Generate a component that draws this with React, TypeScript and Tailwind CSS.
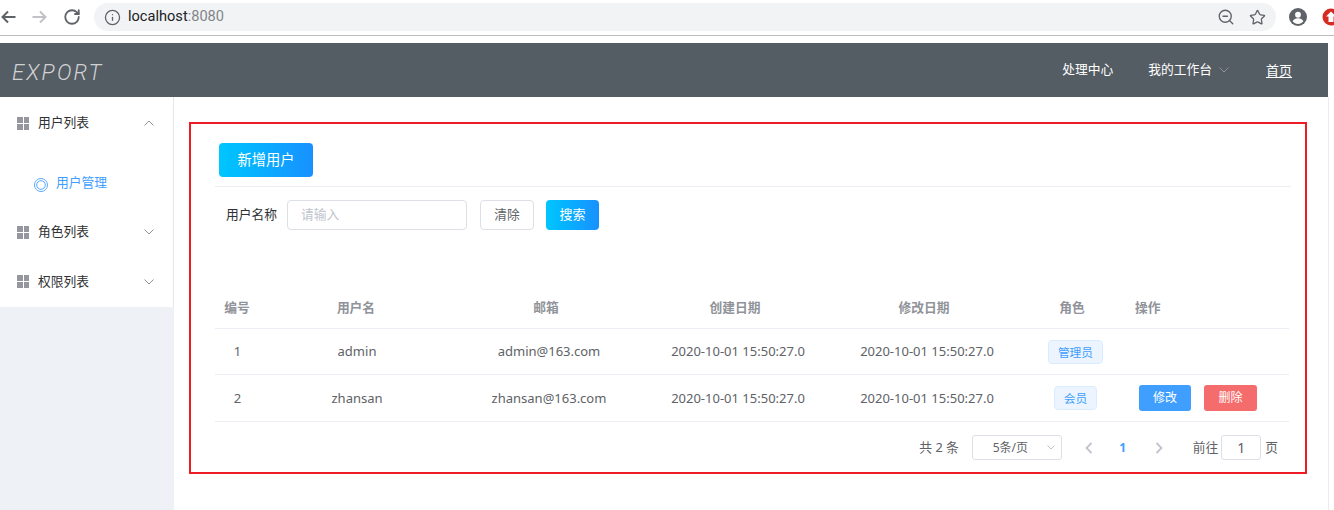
import { RotateCw, Info, ZoomOut, Star } from "lucide-react";

const users = [
  { id: 1, name: "admin", email: "admin@163.com", created: "2020-10-01 15:50:27.0", updated: "2020-10-01 15:50:27.0", role: "管理员", editable: false },
  { id: 2, name: "zhansan", email: "zhansan@163.com", created: "2020-10-01 15:50:27.0", updated: "2020-10-01 15:50:27.0", role: "会员", editable: true },
];

const cols = "grid grid-cols-[44px_196px_188px_190px_188px_108px_160px]";

function GridIcon() {
  return (
    <span className="grid grid-cols-2 gap-px w-3 h-[13px] mr-[9px] shrink-0">
      <i className="bg-[#96969e]" />
      <i className="bg-[#96969e]" />
      <i className="bg-[#96969e]" />
      <i className="bg-[#96969e]" />
    </span>
  );
}

function Arrow({ up, color = "#909399", className }: { up?: boolean; color?: string; className?: string }) {
  return (
    <svg width="10" height="6" viewBox="0 0 10 6" fill="none" stroke={color} className={className}>
      <path d={up ? "M.5 5.500 5 1l4.500 4.500" : "M.5.500 5 5 9.500.500"} />
    </svg>
  );
}

function PageArrow({ right }: { right?: boolean }) {
  return (
    <svg width="8" height="12" viewBox="0 0 8 12" fill="none" stroke="#c0c4cc" strokeWidth="1.800">
      <path d={right ? "M1.500 1l5 5-5 5" : "M6.500 1l-5 5 5 5"} />
    </svg>
  );
}

function MenuItem({ label, open, className }: { label: string; open?: boolean; className?: string }) {
  return (
    <div className={`h-[50px] flex items-center pl-[17px] pr-[19px] text-[12.75px] text-[#303133] ${className ?? ""}`}>
      <GridIcon />
      <span className="flex-1">{label}</span>
      <Arrow up={open} />
    </div>
  );
}

function BrowserBar() {
  return (
    <div className="h-9 shrink-0 border-b border-[#bdbdbd] flex items-center pb-px">
      <svg width="16" height="16" viewBox="0 0 16 16" fill="none" stroke="#5f6368" strokeWidth="2" className="shrink-0">
        <path d="M15.500 8H3M8 2.500 2.500 8 8 13.500" />
      </svg>
      <svg width="16" height="16" viewBox="0 0 16 16" fill="none" stroke="#c0c2c5" strokeWidth="2" className="ml-4 shrink-0">
        <path d="M.5 8H13M8 2.500 13.500 8 8 13.500" />
      </svg>
      <RotateCw size={18} strokeWidth={2.400} className="text-[#5f6368] ml-[15px] shrink-0" />
      <div className="ml-[13px] w-[1182px] shrink-0 h-7 rounded-full bg-[#f1f3f4] flex items-center pl-[10px] pr-[10px]">
        <Info size={17} strokeWidth={1.800} className="text-[#5f6368]" />
        <span className="ml-[7px] flex-1 text-[14.6px] text-[#202124] font-['Roboto',sans-serif]">
          localhost<span className="text-[#80868b]">:8080</span>
        </span>
        <ZoomOut size={18} strokeWidth={1.800} className="text-[#5f6368] mr-[14px]" />
        <Star size={17} strokeWidth={1.800} className="text-[#5f6368]" />
      </div>
      <svg width="18" height="18" viewBox="0 0 20 20" className="ml-[13px] shrink-0">
        <circle cx="10" cy="10" r="10" fill="#5f6368" />
        <circle cx="10" cy="7.500" r="3.200" fill="#fff" />
        <path d="M4 14.800c1-2.500 3.500-3.500 6-3.500s5 1 6 3.500c-1.400 1.800-3.600 2.900-6 2.900s-4.600-1.100-6-2.900z" fill="#fff" />
      </svg>
      <svg width="18" height="18" viewBox="0 0 18 18" className="ml-[15px] shrink-0">
        <circle cx="9" cy="9" r="8.500" fill="#d62b20" />
        <path d="M9 3.500l5 5h-2.500V14h-5V8.500H4z" fill="#fff" />
      </svg>
    </div>
  );
}

function Header() {
  return (
    <header className="mt-[7px] w-[1328px] h-[54px] shrink-0 bg-[#545c64] flex items-center pl-3 text-white">
      <span className="flex-1 mt-[5px] text-[22px] italic font-light text-[#d0d2d4] tracking-[2.200px] font-['Roboto',sans-serif]">EXPORT</span>
      <span className="text-[12.75px]">处理中心</span>
      <span className="text-[12.75px] ml-[35px]">我的工作台</span>
      <Arrow className="ml-[7px]" />
      <span className="text-[13px] ml-[37px] mr-9 mt-[2px] underline underline-offset-2 decoration-[#fff]">首页</span>
    </header>
  );
}

function Sidebar() {
  return (
    <aside className="w-[174px] shrink-0 bg-[#eef1f6] self-stretch">
      <div className="bg-white h-[210px] border-r border-[#e6e6e6]">
        <MenuItem label="用户列表" open className="pt-[2px]" />
        <div className="h-[60px] pl-[34px] pt-3 flex items-center text-[12.75px] text-[#409eff]">
          <svg width="14" height="14" viewBox="0 0 14 14" className="mr-2 mt-[3px]" fill="none" stroke="#5aa9ff">
            <circle cx="7" cy="7" r="6.500" />
            <circle cx="7" cy="7" r="4.300" />
          </svg>
          用户管理
        </div>
        <MenuItem label="角色列表" />
        <MenuItem label="权限列表" className="pb-[1px]" />
      </div>
    </aside>
  );
}

function GradientButton({ label, className }: { label: string; className: string }) {
  return (
    <button className={`rounded-[4px] bg-gradient-to-r from-[#00c6ff] to-[#1890ff] text-white ${className}`}>
      {label}
    </button>
  );
}

function UserTable() {
  return (
    <div className="mt-[60px] w-[1074px]">
      <div className={`${cols} h-[39px] pb-[2px] items-center border-b border-[#ebeef5] text-[12.75px] font-bold text-[#909399] text-center`}>
        <span>编号</span>
        <span className="pr-[2px]">用户名</span>
        <span className="pr-[6px]">邮箱</span>
        <span className="pr-[6px]">创建日期</span>
        <span className="pr-[6px]">修改日期</span>
        <span className="pr-[6px]">角色</span>
        <span className="text-left pl-[6px]">操作</span>
      </div>
      {users.map((u) => (
        <div
          key={u.id}
          className={`${cols} items-center border-b border-[#ebeef5] text-[13px] text-[#606266] text-center ${u.editable ? "h-[47px] pt-px" : "h-[46px]"}`}
        >
          <span className="pl-px">{u.id}</span>
          <span>{u.name}</span>
          <span>{u.email}</span>
          <span>{u.created}</span>
          <span>{u.updated}</span>
          <span className={`flex justify-center pl-px ${u.editable ? "-mt-px" : ""}`}>
            <span className="h-6 px-[9px] leading-[22px] rounded-[4px] border border-[#d9ecff] bg-[#ecf5ff] text-[#409eff] text-[11.75px]">
              {u.role}
            </span>
          </span>
          <span className="flex gap-[13px] pl-[10px] -mt-px">
            {u.editable && (
              <>
                <button className="w-[52px] h-[26px] rounded-[3px] bg-[#409eff] text-white text-[12px]">修改</button>
                <button className="w-[53px] h-[26px] rounded-[3px] bg-[#f56c6c] text-white text-[12px]">删除</button>
              </>
            )}
          </span>
        </div>
      ))}
    </div>
  );
}

function Pagination() {
  return (
    <div className="mt-[13px] w-[1063px] flex items-center justify-end text-[12.75px] text-[#606266]">
      <span>共 2 条</span>
      <div className="ml-[13px] w-[90px] h-[25px] border border-[#dcdfe6] rounded-[3px] flex items-center pl-5 pr-[6px] text-[12px]">
        <span className="flex-1">5条/页</span>
        <svg width="8" height="5" viewBox="0 0 8 5" fill="none" stroke="#c0c4cc"><path d="M.5.500 4 4 7.500.500" /></svg>
      </div>
      <span className="ml-[23px] flex"><PageArrow /></span>
      <span className="w-[60px] text-center text-[12px] font-bold text-[#409eff]">1</span>
      <span className="ml-[2px] flex"><PageArrow right /></span>
      <span className="ml-[30px]">前往</span>
      <div className="ml-[3px] w-10 h-[25px] border border-[#dcdfe6] rounded-[3px] flex items-center justify-center text-[14px]">1</div>
      <span className="ml-1">页</span>
    </div>
  );
}

export default function App() {
  return (
    <div className="w-[1334px] h-[510px] overflow-hidden bg-white flex flex-col font-['Noto_Sans','Noto_Sans_CJK_SC',sans-serif]">
      <BrowserBar />
      <Header />
      <div className="flex flex-1 min-h-0">
        <Sidebar />
        <main className="flex-1 pl-[15px] pt-[25px]">
          <section className="w-[1118px] h-[352px] border-2 border-[#ed1c24] pl-6 pt-[19px]">
            <GradientButton label="新增用户" className="ml-1 w-[94px] h-[34px] block text-[14.25px]" />
            <div className="mt-[9px] w-[1076px] border-t border-[#ebeef5]" />
            <div className="mt-[13px] flex items-center h-[30px] text-[12.75px] text-[#606266]">
              <span className="ml-[11px] w-[61px] text-[#303133]">用户名称</span>
              <div className="w-[180px] h-[30px] border border-[#dcdfe6] rounded-[4px] pl-[13px] flex items-center text-[#c0c4cc]">请输入</div>
              <button className="ml-[13px] w-[54px] h-[30px] border border-[#dcdfe6] rounded-[4px]">清除</button>
              <GradientButton label="搜索" className="ml-3 w-[53px] h-[30px] text-[13px]" />
            </div>
            <UserTable />
            <Pagination />
          </section>
        </main>
        <div className="w-[6px] border-l border-[#ececec]" />
      </div>
    </div>
  );
}
